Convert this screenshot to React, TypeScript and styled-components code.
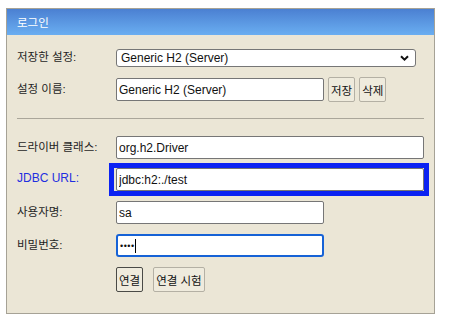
import React from 'react'
import styled, { createGlobalStyle } from 'styled-components'

const GlobalStyle = createGlobalStyle`
  body {
    margin: 0;
    background: #ffffff;
    font-family: "Liberation Sans", Arial, "Noto Sans CJK KR", sans-serif;
    color: #222;
  }
  * { box-sizing: border-box; }
`

const Page = styled.div`
  padding: 8px 0 0 6px;
`

const Panel = styled.div`
  width: 429px;
  border: 1px solid #a6a296;
  background-color: #ebe6d6;
`

const Header = styled.div`
  height: 26px;
  display: flex;
  align-items: center;
  padding-left: 10px;
  background: linear-gradient(#4b80d2, #6aaef1);
  color: #ffffff;
  font-size: 11.5px;
`

const Body = styled.div`
  display: flex;
  flex-direction: column;
  padding: 0 10px 21px 10px;
`

const Row = styled.div<{ $top: number; $height: number }>`
  display: flex;
  align-items: center;
  margin-top: ${({ $top }) => $top}px;
  height: ${({ $height }) => $height}px;
`

const Label = styled.div<{ $highlight?: boolean }>`
  width: 99px;
  flex: none;
  padding-bottom: 4px;
  font-size: ${({ $highlight }) => ($highlight ? '12px' : '11.5px')};
  color: ${({ $highlight }) => ($highlight ? '#1f2fe0' : '#1e1e1e')};
`

const Field = styled.div`
  display: flex;
  align-items: center;
  gap: 4px;
`

const TextInput = styled.input<{ $width: number }>`
  width: ${({ $width }) => $width}px;
  height: 23px;
  border: 1px solid #767676;
  border-radius: 2px;
  padding: 0 2px;
  background: #ffffff;
  font-family: inherit;
  font-size: 12px;
  color: #111;
  outline: none;
`

const SelectWrap = styled.div`
  width: 300px;
  height: 18px;
  display: flex;
  align-items: center;
  border: 1px solid #767676;
  border-radius: 3px;
  background: #ffffff;
  padding-right: 6px;
`

const Select = styled.select`
  flex: 1;
  height: 100%;
  appearance: none;
  border: none;
  background: transparent;
  padding: 0 4px;
  font-family: inherit;
  font-size: 12px;
  color: #111;
  outline: none;
`

const Highlight = styled.div`
  margin-left: -7px;
  width: 321px;
  height: 33px;
  border: 5px solid #0b22f2;
  padding-left: 2px;
  display: flex;
  align-items: center;
`

const PasswordBox = styled.div`
  width: 208px;
  height: 23px;
  display: flex;
  align-items: center;
  padding-left: 2px;
  border: 2px solid #1662d6;
  border-radius: 3px;
  background: #ffffff;
  font-size: 12px;
`

const Dots = styled.span`
  font-size: 9px;
  letter-spacing: 0.5px;
  color: #111;
`

const Caret = styled.span`
  display: inline-block;
  width: 1px;
  height: 14px;
  background: #000;
`

const Button = styled.button<{ $strong?: boolean }>`
  height: 25px;
  padding: 0 2px;
  border: 1px solid ${({ $strong }) => ($strong ? '#4a4a46' : '#b4b0a4')};
  border-radius: 2px;
  background: #efebdd;
  font-family: inherit;
  font-size: 11.5px;
  color: #111;
`

const ButtonRow = styled.div`
  display: flex;
  gap: 10px;
  margin-left: 99px;
`

const Separator = styled.div`
  height: 1px;
  margin-top: 16px;
  background: #aaa69a;
`

const Chevron = () => (
  <svg width="9" height="6" viewBox="0 0 9 6">
    <path d="M1 1.2 L4.5 4.6 L8 1.2" fill="none" stroke="#111" strokeWidth="2" />
  </svg>
)

export default function App() {
  return (
    <Page>
      <GlobalStyle />
      <Panel>
        <Header>로그인</Header>
        <Body>
          <Row $top={14} $height={18}>
            <Label>저장한 설정:</Label>
            <SelectWrap>
              <Select defaultValue="server">
                <option value="server">Generic H2 (Server)</option>
                <option value="embedded">Generic H2 (Embedded)</option>
              </Select>
              <Chevron />
            </SelectWrap>
          </Row>
          <Row $top={10} $height={25}>
            <Label>설정 이름:</Label>
            <Field>
              <TextInput $width={208} defaultValue="Generic H2 (Server)" />
              <Button>저장</Button>
              <Button>삭제</Button>
            </Field>
          </Row>
          <Separator />
          <Row $top={17} $height={23}>
            <Label>드라이버 클래스:</Label>
            <TextInput $width={308} defaultValue="org.h2.Driver" />
          </Row>
          <Row $top={4} $height={33}>
            <Label $highlight>JDBC URL:</Label>
            <Highlight>
              <TextInput $width={308} defaultValue="jdbc:h2:./test" />
            </Highlight>
          </Row>
          <Row $top={5} $height={23}>
            <Label>사용자명:</Label>
            <TextInput $width={208} defaultValue="sa" />
          </Row>
          <Row $top={10} $height={23}>
            <Label>비밀번호:</Label>
            <PasswordBox>
              <Dots>••••</Dots>
              <Caret />
            </PasswordBox>
          </Row>
          <Row $top={10} $height={25}>
            <ButtonRow>
              <Button $strong>연결</Button>
              <Button>연결 시험</Button>
            </ButtonRow>
          </Row>
        </Body>
      </Panel>
    </Page>
  )
}
